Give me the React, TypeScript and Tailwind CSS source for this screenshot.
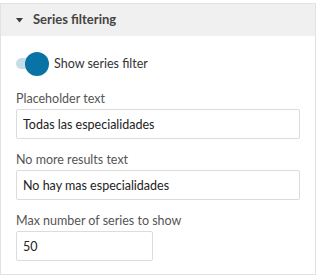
export default function App() {
  const fields = [
    { label: "Placeholder text", value: "Todas las especialidades", width: "w-full" },
    { label: "No more results text", value: "No hay mas especialidades", width: "w-full" },
    { label: "Max number of series to show", value: "50", width: "w-[137px]" },
  ];

  return (
    <div className="h-[276px] w-[318px] bg-white pt-[3px] font-['Lato','Liberation_Sans',sans-serif]">
      <div className="mr-[2px] h-[272px] border border-[#e2e2e2]">
        <div className="flex h-8 items-center gap-[10px] bg-[#f0f0f0] pl-[15px]">
          <svg width="7" height="5" viewBox="0 0 7 5" className="mt-[1px]">
            <path d="M0 0h7L3.5 4.5z" fill="#3c3c3c" />
          </svg>
          <span className="text-[13px] font-bold text-[#444]">Series filtering</span>
        </div>

        <div className="px-[15px] pt-4">
          <label className="flex h-6 items-center">
            <span className="relative mr-[5px] block h-6 w-[33px]">
              <span className="absolute left-0 top-[6px] h-[11px] w-[24px] rounded-full bg-[#c6dce7]" />
              <span className="absolute left-[9px] top-0 h-6 w-6 rounded-full bg-[#0a73a6]" />
            </span>
            <span className="text-[12.5px] text-[#333]">Show series filter</span>
          </label>

          <div className="mt-[14px] flex flex-col gap-3">
            {fields.map((f) => (
              <div key={f.label}>
                <div className="flex h-[18px] items-center text-[12.5px] text-[#555]">{f.label}</div>
                <input
                  readOnly
                  value={f.value}
                  className={`${f.width} mt-[1px] h-[30px] rounded-[2px] border border-[#dcdcdc] bg-white px-[6px] text-[12.5px] text-[#222] outline-none`}
                />
              </div>
            ))}
          </div>
        </div>
      </div>
    </div>
  );
}
